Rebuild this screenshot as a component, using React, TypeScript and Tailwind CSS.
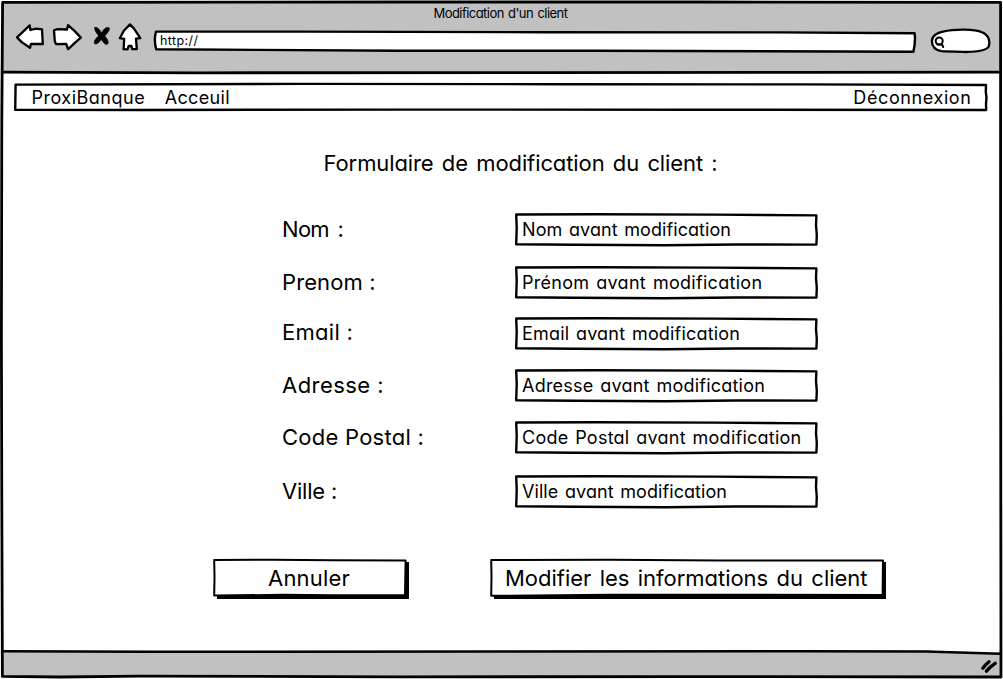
import type { ReactNode } from "react";

type FrameProps = {
  className: string;
  viewBox: string;
  path: string;
  strokeWidth?: number;
  children?: ReactNode;
};

/** A box whose outline is a slightly uneven pen stroke. */
function SketchBox({ className, viewBox, path, strokeWidth = 2.4, children }: FrameProps) {
  return (
    <div className={`relative flex shrink-0 items-center whitespace-nowrap ${className}`}>
      <svg
        className="pointer-events-none absolute inset-0 size-full overflow-visible"
        viewBox={viewBox}
        preserveAspectRatio="none"
        aria-hidden="true"
      >
        <path d={path} fill="white" stroke="black" strokeWidth={strokeWidth} strokeLinejoin="round" />
      </svg>
      <span className="relative flex w-full items-center">{children}</span>
    </div>
  );
}

const fields = [
  { label: "Nom :", value: "Nom avant modification", row: "mt-0", labelClass: "tracking-[-0.7px] [word-spacing:3px] pb-[2px]", valueClass: "tracking-[0.07px]" },
  { label: "Prenom :", value: "Prénom avant modification", row: "mt-5", labelClass: "tracking-[0.1px] pb-[2px]", valueClass: "tracking-[0.29px]" },
  { label: "Email :", value: "Email avant modification", row: "mt-[18px]", labelClass: "tracking-[0.3px] [word-spacing:0px] pb-[3px]", valueClass: "tracking-[0.18px]" },
  { label: "Adresse :", value: "Adresse avant modification", row: "mt-[19px]", labelClass: "tracking-[0.45px] [word-spacing:0px] pb-[2px]", valueClass: "tracking-[0.22px]" },
  { label: "Code Postal :", value: "Code Postal avant modification", row: "mt-[19px]", labelClass: "tracking-[0.25px] pb-[2px]", valueClass: "tracking-[0.24px]" },
  { label: "Ville :", value: "Ville avant modification", row: "mt-[21px]", labelClass: "tracking-[-0.2px] pb-[2px]", valueClass: "tracking-[0.07px]" },
];

function NavIcons() {
  return (
    <svg className="ml-3 h-9 w-[136px] shrink-0" viewBox="12 20 136 36" fill="white" stroke="black" strokeWidth="2.3" strokeLinejoin="round" strokeLinecap="round" aria-hidden="true">
      <path d="M17 37.4 29.7 25.4 30.4 30 36 28.6 42 29.4 42.8 44 31 43.8 30 47.8 22 42.4Z" />
      <path d="M54 30.4 57 29.2 67 29.5 68 25.2 75 31.4 80.8 37.6 74 43.6 68.2 49.3 66.2 43.8 56 44.2 54.8 41Z" />
      <path d="M94.8 27.6C97.5 26.6 99.5 29.4 101.6 33C103.8 28.6 106.8 26.5 109.2 28C109.8 30.6 106.6 34 104.6 36C107 38.4 109 41.7 107.7 44C105.2 45.2 103 42.5 101.5 39.2C99.4 42.2 96.8 44.8 94.5 43.6C93.5 41 96.4 38 98.7 35.8C96.4 33 94.2 30 94.8 27.6Z" fill="black" strokeWidth="0.8" />
      <path d="M130 24.4 134 28.6 140.3 38.2 136 38.6 136.8 49.2 132.2 49.2 131.4 46 128.6 46 127.6 49.4 123.6 49.2 124.2 38.8 119.8 38.2 124 30.5Z" />
    </svg>
  );
}

export default function App() {
  return (
    <div className="relative flex h-[679px] w-[1003px] flex-col overflow-hidden bg-white font-['Inter',sans-serif] text-black [font-feature-settings:'cv11']">
      <header className="mt-0.5 mr-0.5 ml-0.5 flex h-[70px] shrink-0 flex-col bg-[#c1c1c1]">
        <h1 className="h-[18px] pt-[3px] pl-[431.5px] text-[13px] leading-[17px] tracking-[-0.55px] [word-spacing:1.2px]">Modification d'un client</h1>
        <div className="-ml-0.5 flex h-9 items-center">
          <NavIcons />
          <SketchBox
            className="ml-1.5 h-5 w-[762px] translate-y-[4px] pb-[2px] pl-[6px] text-[12.5px] tracking-[0.4px]"
            viewBox="154 32 762 20"
            path="M156 31.6 Q153.6 40 156.2 49.3 L400 50.8 600 50.8 913.4 51.8 Q915.8 41 914.6 33.2 L780 32.4 545 32.2 300 31.6Z"
          >
            http://
          </SketchBox>
          <svg className="ml-3.5 h-7 w-[62px] shrink-0 translate-y-[3px]" viewBox="930 27 62 28" fill="white" stroke="black" strokeWidth="2.3" aria-hidden="true">
            <path d="M943 31.6C955 28.7 975 29 982 32.2C988 34.6 990.4 40 988.8 46.4C987 50.5 975 51.8 966 52C957 51.8 946 51.6 941.5 51.2C935 50 932 46 931.9 41.2C931.8 36 937 32.6 943 31.6Z" />
            <circle cx="939.2" cy="41" r="3.5" strokeWidth="2" />
            <path d="M937.4 44.4 942.2 44.8 943.2 47" strokeWidth="2" strokeLinecap="round" />
          </svg>
        </div>
      </header>

      <main className="flex h-[579px] shrink-0 flex-col">
        <SketchBox
          className="mt-3 ml-[15px] h-[26px] w-[972px] text-[18px]"
          viewBox="15 84 972 26"
          path="M15.6 84.6 300 83.9 560 84.2 800 84.4 986 85 985.8 92 986.5 98 986 104 986.2 110 700 109.7 400 109.6 140 110 15.2 109.8Z"
        >
          <nav className="flex w-full items-center pt-px">
            <a className="pl-[16.5px] tracking-[0.5px]">ProxiBanque</a>
            <a className="pl-[19.5px] tracking-[0.35px]">Acceuil</a>
            <a className="ml-auto pr-[15.5px] tracking-[0.6px]">Déconnexion</a>
          </nav>
        </SketchBox>

        <h2 className="mt-10 ml-[323.5px] h-[26px] text-[22px] leading-[26px] tracking-[-0.1px] [word-spacing:2.2px] whitespace-nowrap">
          Formulaire de modification du client :
        </h2>

        <form className="mt-[37px]">
          {fields.map((field) => (
            <div key={field.label} className={`flex h-[33px] items-center pl-[282px] ${field.row}`}>
              <label className={`w-[233px] shrink-0 text-[22px] leading-[26px] ${field.labelClass}`}>{field.label}</label>
              <SketchBox
                className={`h-[33px] w-[303px] pl-[7px] text-[18px] [word-spacing:1.5px] ${field.valueClass}`}
                viewBox="0 0 303 33"
                path="M1.2 1.5 80 1.2 200 1.6 301.4 2.4 301 12 301.8 22 301.4 31.6 220 31.5 150 32.2 60 31.7 1.2 31.2 1.7 15Z"
              >
                {field.value}
              </SketchBox>
            </div>
          ))}
        </form>

        <div className="mt-[51px] flex pl-[213px]">
          <SketchBox
            className="h-[37px] w-[194px] justify-center pl-[55px] text-[22px] leading-[26px] tracking-[0.2px] before:absolute before:top-[3px] before:left-1 before:h-[37px] before:w-[192px] before:bg-black"
            viewBox="0 0 194 37"
            path="M1.2 1 60 0.8 120 1.3 192.6 1.6 192 36 120 36.3 70 35.8 1.2 36.6 1.5 18Z"
            strokeWidth={2}
          >
            Annuler
          </SketchBox>
          <SketchBox
            className="ml-[83px] h-[37px] w-[394px] pl-[15px] text-[22px] leading-[26px] tracking-[-0.02px] [word-spacing:2.2px] before:absolute before:top-[3px] before:left-1 before:h-[37px] before:w-[392px] before:bg-black"
            viewBox="0 0 394 37"
            path="M1.2 1 120 0.7 230 1.4 393 1.6 392.6 36 230 35.8 120 35.8 1.2 36.8 1.5 18Z"
            strokeWidth={2}
          >
            Modifier les informations du client
          </SketchBox>
        </div>
      </main>

      <footer className="mx-0.5 h-[25px] shrink-0 bg-[#c1c1c1]" />

      <svg className="pointer-events-none absolute inset-0 size-full" viewBox="0 0 1003 679" fill="none" stroke="black" strokeWidth="2.8" strokeLinejoin="round" aria-hidden="true">
        <path d="M926 651 999 653 999 648 926 648Z" fill="white" stroke="none" />
        <path d="M2.6 2.4 400 2 700 2 1000.6 2.4 1000.6 300 1001 677 700 676.6 400 676.8 140 676.2 60 677 2.4 676.4 1.8 500 1.4 340 1.8 120Z" />
        <path d="M2.4 72.2 200 72.8 540 72.6 800 72.4 1000.6 72.2" />
        <path d="M2.4 651.2 150 651.8 500 651.6 800 651.3 926 651.4 1000.6 653.8" strokeWidth="2.5" />
        <path d="M982.8 668.2 Q985.4 664.8 989 661.8M986.4 671.2 Q990 666.8 995.2 663.4" strokeWidth="3.4" strokeLinecap="round" />
      </svg>
    </div>
  );
}
